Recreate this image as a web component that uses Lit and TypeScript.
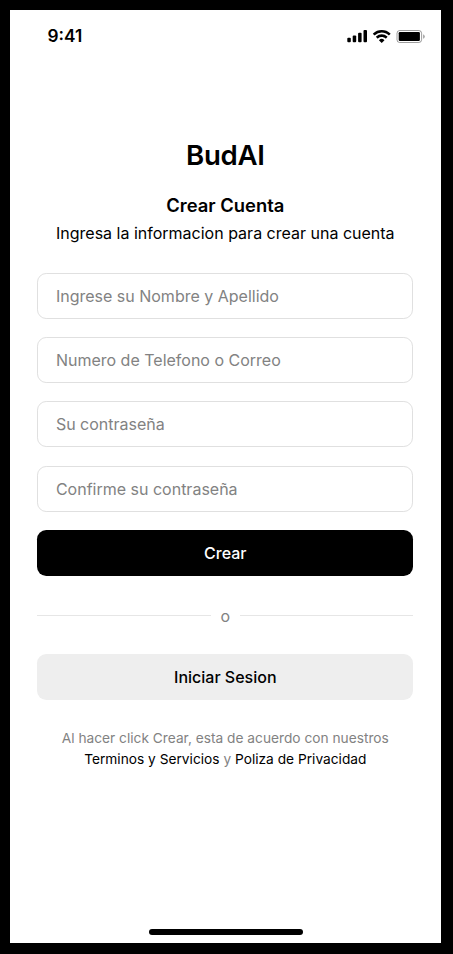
import { LitElement, html, css } from "lit";
import { customElement } from "lit/decorators.js";

@customElement("app-root")
export class AppRoot extends LitElement {
  static styles = css`
    :host { display: block; box-sizing: border-box; height: 954px; background: #000; padding: 10px 12px 11px 10px; font-family: Inter, sans-serif; color: #000; }
    * { box-sizing: border-box; }
    .screen { height: 933px; width: 431px; background: #fff; display: flex; flex-direction: column; padding: 0 27.7px 0 27.3px; }
    .status { height: 51px; flex: none; display: flex; justify-content: space-between; margin: 0 -11.2px 0 10.2px; }
    .time { font-size: 17.3px; font-weight: 600; line-height: 22px; margin-top: 15px; }
    .icons { display: block; margin-top: 19px; }
    h1 { margin: 74px 0 0; text-align: center; font-size: 27.6px; line-height: 40px; font-weight: 600; letter-spacing: -0.28px; }
    h2 { margin: 17px 0 0; text-align: center; font-size: 18.4px; line-height: 27px; font-weight: 600; }
    .sub { text-align: center; font-size: 16px; line-height: 24px; margin: 2px 0 27.6px; white-space: nowrap; }
    form { display: flex; flex-direction: column; gap: 18.35px; }
    .box { height: 46px; flex: none; border-radius: 9.2px; font: 400 16px/24px Inter, sans-serif; width: 100%; display: flex; align-items: center; }
    input.box { border: 1.2px solid #e0e0e0; background: #fff; padding: 0 17.6px; outline: none; }
    input::placeholder { color: #828282; opacity: 1; }
    button { border: 0; justify-content: center; padding: 0; }
    button.primary { background: #000; color: #fff; font-weight: 500; }
    button.secondary { background: #eee; color: #000; font-weight: 500; }
    .or { display: flex; align-items: center; gap: 9.5px; height: 24px; margin: 27.6px 0 26.2px; color: #828282; font-size: 16px; line-height: 24px; }
    .or i { flex: 1; height: 1px; background: #e6e6e6; }
    .legal { text-align: center; font-size: 13.73px; line-height: 20.8px; color: #828282; margin: 28.1px 0 0; }
    .legal span { color: #000; }
    .home { width: 154px; height: 5.8px; border-radius: 3px; background: #000; margin: auto auto 8.4px 111.7px; }
  `;
  render() {
    const fields = ["Ingrese su Nombre y Apellido", "Numero de Telefono o Correo", "Su contraseña", "Confirme su contraseña"];
    return html`<main class="screen">
      <div class="status"><div class="time">9:41</div>
        <svg class="icons" width="79" height="15" viewBox="0 0 79 15">
          <rect x="1.3" y="8.7" width="3.5" height="4.6" rx="1"/><rect x="6.7" y="6.4" width="3.5" height="6.9" rx="1"/><rect x="12.1" y="3.7" width="3.5" height="9.6" rx="1"/><rect x="17.5" y="1" width="3.5" height="12.3" rx="1"/>
          <g transform="translate(26.9 1) scale(1.15)"><path d="M7.67 2.28c2.22 0 4.36.85 5.98 2.38.12.12.31.12.43 0l1.16-1.18a.32.32 0 0 0 0-.45 11 11 0 0 0-15.14 0 .32.32 0 0 0 0 .45l1.16 1.18c.12.12.31.12.43 0a8.7 8.7 0 0 1 5.98-2.38Zm0 3.8c1.22 0 2.4.46 3.3 1.28.12.12.31.12.44 0l1.16-1.18a.32.32 0 0 0 0-.46 7.12 7.12 0 0 0-9.79 0 .32.32 0 0 0 0 .46l1.16 1.18c.12.12.32.12.44 0a4.91 4.91 0 0 1 3.29-1.28Zm2.32 2.79a.32.32 0 0 1-.09.23l-2.01 2.02a.31.31 0 0 1-.45 0L5.43 9.1a.32.32 0 0 1 .01-.47 3.43 3.43 0 0 1 4.45 0c.07.06.1.15.1.24Z"/></g>
          <rect x="51" y="1.5" width="24.6" height="12" rx="2.8" fill="none" stroke="#000" stroke-opacity=".38"/><rect x="52.7" y="3.1" width="21.2" height="8.8" rx="1.2"/><path d="M77.2 5.2v4.6a2.5 2.5 0 0 0 0-4.6Z" fill-opacity=".4"/>
        </svg></div>
      <h1>BudAI</h1><h2>Crear Cuenta</h2>
      <div class="sub">Ingresa la informacion para crear una cuenta</div>
      <form>${fields.map((f) => html`<input class="box" placeholder=${f}>`)}<button type="button" class="box primary">Crear</button></form>
      <div class="or"><i></i>o<i></i></div>
      <button type="button" class="box secondary">Iniciar Sesion</button>
      <p class="legal">Al hacer click Crear, esta de acuerdo con nuestros<br><span>Terminos y Servicios</span> y <span>Poliza de Privacidad</span></p>
      <div class="home"></div>
    </main>`;
  }
}
